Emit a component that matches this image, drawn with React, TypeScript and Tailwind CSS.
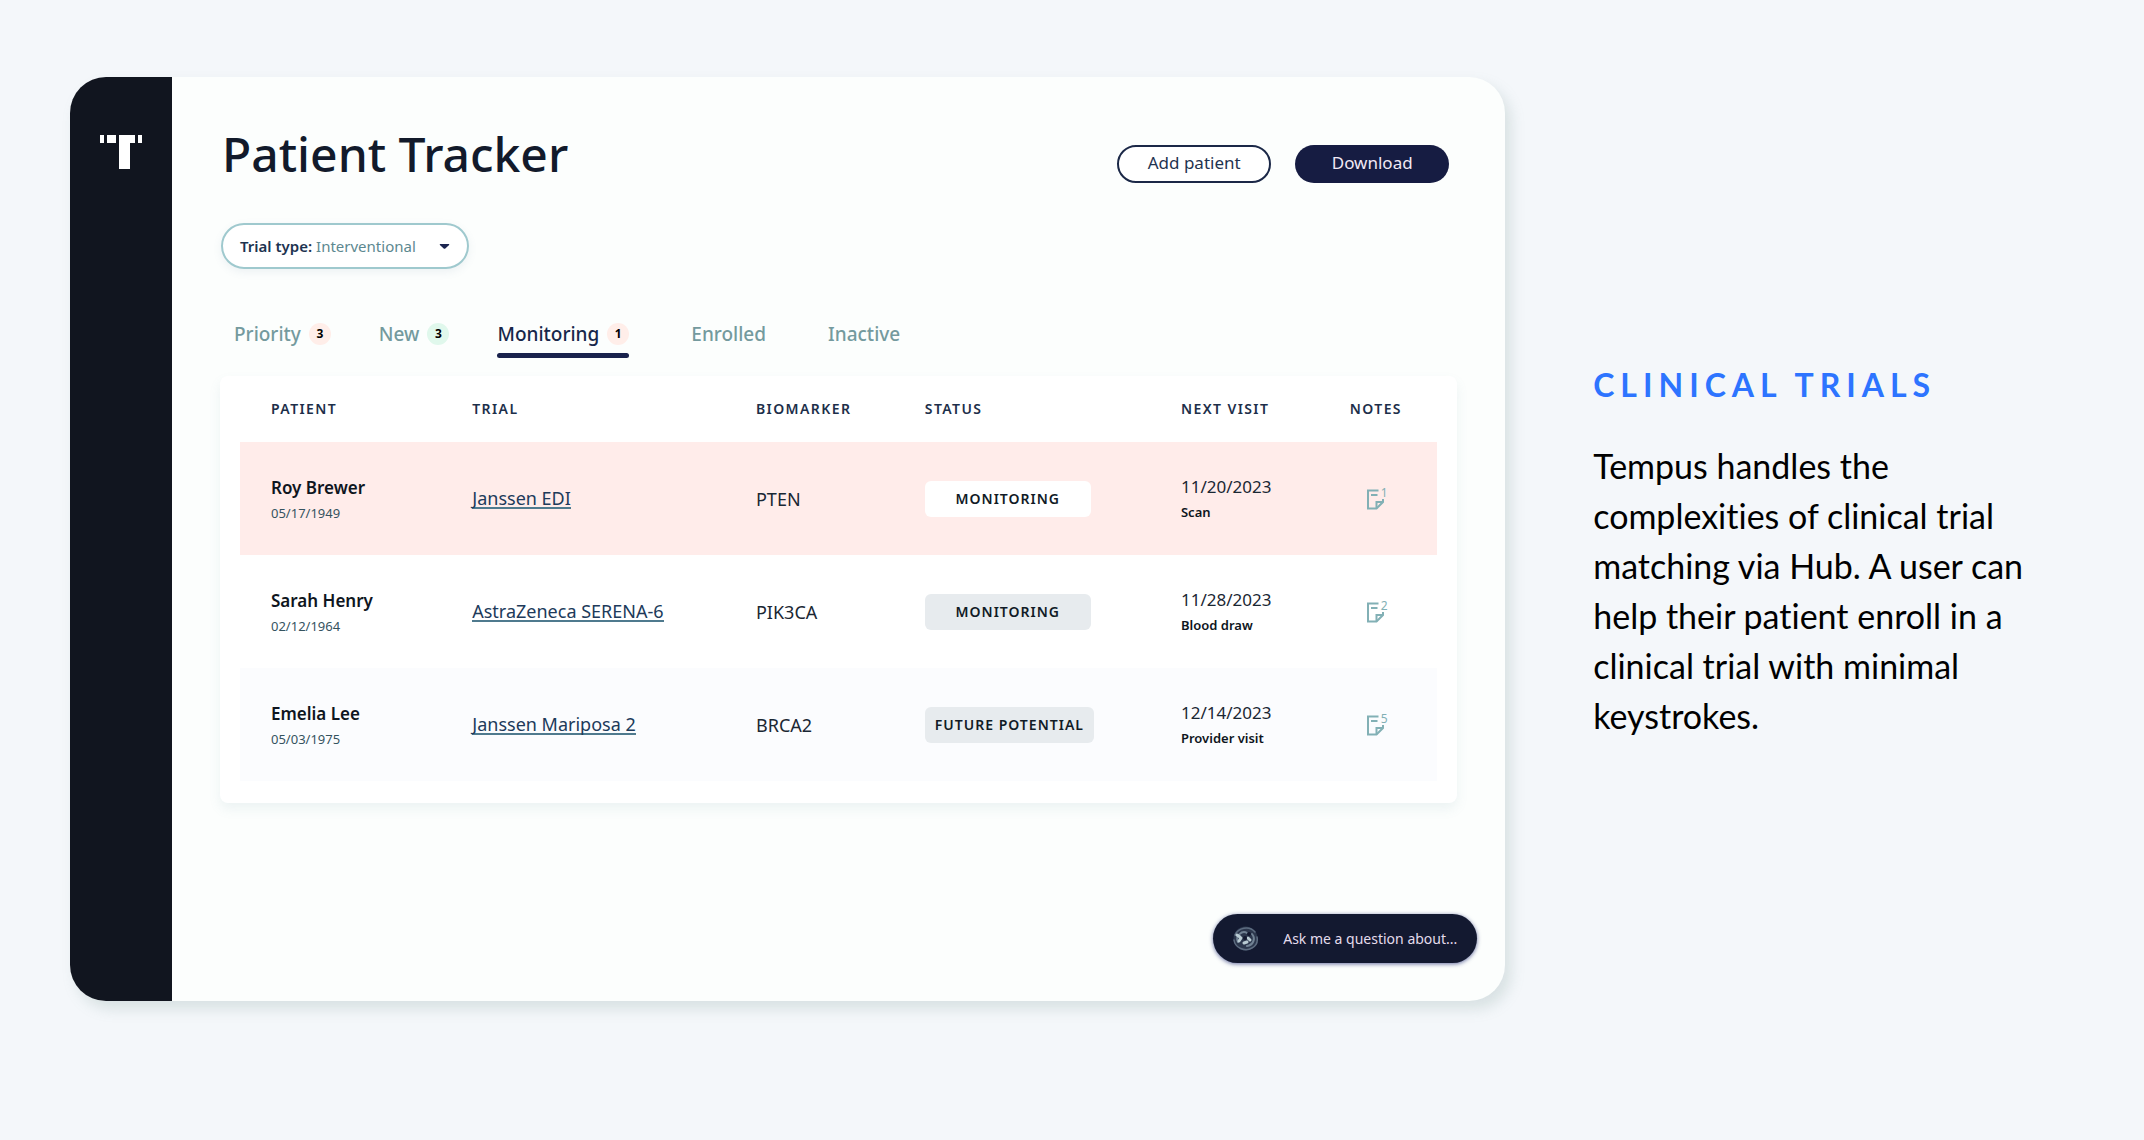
import React from 'react';

type Tab = { label: string; count?: number; badge?: string };

const tabs: Tab[] = [
  { label: 'Priority', count: 3, badge: 'bg-[#ffeee9]' },
  { label: 'New', count: 3, badge: 'bg-[#e0f8ec]' },
  { label: 'Monitoring', count: 1, badge: 'bg-[#ffeee9]' },
  { label: 'Enrolled' },
  { label: 'Inactive' }
];

const patients = [
  { name: 'Roy Brewer', dob: '05/17/1949', trial: 'Janssen EDI', biomarker: 'PTEN', status: 'MONITORING', date: '11/20/2023', visit: 'Scan', notes: 1, row: 'bg-[#ffecea]', pill: 'bg-white' },
  { name: 'Sarah Henry', dob: '02/12/1964', trial: 'AstraZeneca SERENA-6', biomarker: 'PIK3CA', status: 'MONITORING', date: '11/28/2023', visit: 'Blood draw', notes: 2, row: 'bg-white', pill: 'bg-[#e7ebee]' },
  { name: 'Emelia Lee', dob: '05/03/1975', trial: 'Janssen Mariposa 2', biomarker: 'BRCA2', status: 'FUTURE POTENTIAL', date: '12/14/2023', visit: 'Provider visit', notes: 5, row: 'bg-[#fbfcfe]', pill: 'bg-[#e7ebee]' }
];

export default function App() {
  return (
    <div className="min-h-screen flex items-start bg-[#f4f7fa] pl-[70px] pt-[77px] pb-16 font-['Noto_Sans',sans-serif]">
      {/* App window */}
      <div className="w-[69.2%] shrink-0 min-h-[924px] flex rounded-[36px] overflow-hidden bg-[#fcfefd] shadow-[6px_8px_14px_rgba(120,150,145,0.22)]">
        <nav className="w-[102px] shrink-0 bg-[#11151f] pt-[58px] flex justify-center items-start">
          <Logo />
        </nav>

        <main className="flex-1 flex flex-col pl-12 pr-7 pt-12 pb-[38px]">
          <div className="pr-5">
            <header className="flex items-end justify-between pl-0.5 pr-2">
              <h1 className="text-5xl leading-[58px] font-medium text-[#121a2b]">Patient Tracker</h1>
              <div className="flex gap-6">
                <button className="w-[154px] h-[38px] rounded-full border-2 border-[#1b2847] bg-white text-[17px] text-[#1f3350] pb-0.5">Add patient</button>
                <button className="w-[154px] h-[38px] rounded-full bg-[#161c42] text-[17px] text-[#f1e9f5] pb-0.5">Download</button>
              </div>
            </header>

            <TrialFilter />

            {/* Tabs */}
            <div role="tablist" className="mt-[49px] pl-3.5 flex gap-12">
              {tabs.map((tab) => (
                <TabButton key={tab.label} tab={tab} active={tab.label === 'Monitoring'} />
              ))}
            </div>

            {/* Patients */}
            <section className="mt-[18px] px-5 pb-[22px] bg-white rounded-lg shadow-[0_6px_12px_rgba(100,150,160,0.1)]">
              <table className="w-full table-fixed text-left">
                <thead>
                  <tr className="h-[66px] text-sm tracking-widest text-[#1d2f4a]">
                    <th className="w-[19.4%] pl-[31px] font-semibold">PATIENT</th>
                    <th className="w-[23.7%] font-semibold">TRIAL</th>
                    <th className="w-[14.1%] font-semibold">BIOMARKER</th>
                    <th className="w-[21.4%] font-semibold">STATUS</th>
                    <th className="w-[14.1%] font-semibold">NEXT VISIT</th>
                    <th className="font-semibold">NOTES</th>
                  </tr>
                </thead>
                <tbody>
                  {patients.map((p) => (
                    <tr key={p.name} className={`h-[113px] ${p.row}`}>
                      <td className="pl-[31px] pt-1">
                        <p className="text-[17px] leading-6 font-semibold text-[#0e1520]">{p.name}</p>
                        <p className="text-[13px] leading-[26px] text-[#35535f]">{p.dob}</p>
                      </td>
                      <td>
                        <a href="#" className="text-lg text-[#203a5a] border-b-2 border-[#4f7a8e] leading-none inline-block">{p.trial}</a>
                      </td>
                      <td className="text-lg text-[#1a2733]">{p.biomarker}</td>
                      <td>
                        <span className={`inline-flex items-center justify-center min-w-[166px] h-9 px-2.5 rounded-md text-sm font-semibold tracking-[1px] text-[#111b26] ${p.pill}`}>
                          {p.status}
                        </span>
                      </td>
                      <td className="pt-0.5">
                        <p className="text-[17px] leading-6 text-[#1a2733]">{p.date}</p>
                        <p className="text-[13px] leading-[26px] font-semibold text-[#0e1520]">{p.visit}</p>
                      </td>
                      <td className="pl-4">
                        <NoteButton count={p.notes} />
                      </td>
                    </tr>
                  ))}
                </tbody>
              </table>
            </section>
          </div>

          <button className="mt-auto self-end w-[264px] h-[49px] rounded-full bg-[#131930] flex items-center pl-[19px] gap-6 text-sm text-[#e3dcec] shadow-[0_1px_4px_rgba(40,50,120,0.7)]">
            <Orb />
            Ask me a question about...
          </button>
        </main>
      </div>

      {/* Caption */}
      <aside className="flex-1 pl-[88px] pr-20 pt-[288px] font-['Lato',sans-serif] [font-variant-ligatures:none]">
        <h2 className="text-[32px] leading-10 font-bold tracking-[6px] text-[#2d74ff]">CLINICAL TRIALS</h2>
        <p className="mt-9 text-[34px] leading-[50px] text-black">
          Tempus handles the complexities of clinical trial matching via Hub. A user can help their patient enroll in a clinical trial with minimal keystrokes.
        </p>
      </aside>
    </div>
  );
}

function TrialFilter() {
  return (
    <div className="mt-10 ml-px w-[248px] h-[46px] flex items-center px-[17px] gap-1 rounded-full border-2 border-[#9fc9ce] bg-white text-[15px] shadow-[0_3px_8px_rgba(100,130,160,0.1)]">
      <label htmlFor="trial-type" className="shrink-0 font-semibold text-[#1d3350]">Trial type:</label>
      <select id="trial-type" className="flex-1 min-w-0 appearance-none bg-transparent text-[#5c8890]">
        <option>Interventional</option>
      </select>
      <svg width="11" height="5" viewBox="0 0 12 6" className="shrink-0" fill="#1b2550">
        <path d="M1 0h10a.7.7 0 0 1 .5 1.2L7 5.4a1.5 1.5 0 0 1-2 0L.5 1.2A.7.7 0 0 1 1 0z" />
      </svg>
    </div>
  );
}

function TabButton({ tab, active }: { tab: Tab; active: boolean }) {
  return (
    <button role="tab" aria-selected={active} className={tab.count ? '' : 'ml-3.5'}>
      <span className={`flex items-center gap-2 text-[19px] leading-8 font-medium ${active ? 'text-[#17274a]' : 'text-[#749a9e]'}`}>
        {tab.label}
        {tab.count && (
          <span className={`w-[22px] h-[22px] rounded-full flex items-center justify-center text-xs font-bold text-black ${tab.badge}`}>
            {tab.count}
          </span>
        )}
      </span>
      <span className={`block mt-[3px] h-[5px] rounded-full ${active ? 'bg-[#19224c]' : ''}`} />
    </button>
  );
}

function NoteButton({ count }: { count: number }) {
  return (
    <button aria-label="Notes" className="flex items-start text-[#82b0b5]">
      <svg width="19" height="21" viewBox="0 0 19 21" fill="none" stroke="currentColor" strokeWidth="2" className="mt-0.5">
        <path d="M12.5 1.5H2v18h8.5l6.5-6.5V10" />
        <path d="M10.5 19.5V13H17M5 6h6.5" />
      </svg>
      <span className="-ml-1 text-xs leading-3">{count}</span>
    </button>
  );
}

function Logo() {
  return (
    <svg width="42" height="34" viewBox="0 0 42 34" fill="#fff">
      <path d="M0 0h4v8H0zM7 0h9v8H7zM19 0h16v8h-5v26H19zM38 0h4v8h-4z" />
    </svg>
  );
}

function Orb() {
  return (
    <svg width="27" height="27" viewBox="0 0 27 27" fill="none" strokeLinecap="round">
      <circle cx="13.5" cy="13.5" r="12" fill="#2c374d" />
      <path d="M3 10C6 3 17 0 23 7M2 15c1 8 11 12 18 8M25 12c1 5-1 9-5 11" stroke="#5d6c80" strokeWidth="1.5" />
      <path d="M6 17c-3-6 4-12 9-9M20 9c4 5 1 11-5 12" stroke="#718294" strokeWidth="2" />
      <path d="M5 10l3 2M9 13l-2 3M16 13l2 2M12 18l3-1" stroke="#b9cbd3" strokeWidth="3" />
      <circle cx="13" cy="13" r="2" fill="#131930" />
      <circle cx="17" cy="9" r="2" fill="#131930" />
    </svg>
  );
}
